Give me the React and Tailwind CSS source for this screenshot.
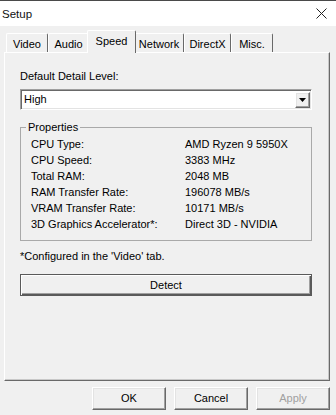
import React from "react";

const raised =
  "bg-[#f0f0f0] border border-t-white border-l-white border-b-[#696969] border-r-[#696969] shadow-[inset_-1px_-1px_0_#a0a0a0,inset_1px_1px_0_#e3e3e3]";

function Tab({ label, w, selected }) {
  if (selected) {
    return (
      <div
        className={`relative z-10 mx-[-2px] mb-[-1px] h-[23px] ${w} flex items-start justify-center pt-[4px] bg-[#f0f0f0] border-t border-l border-r border-t-white border-l-white border-r-[#696969] rounded-t-[2px]`}
      >
        {label}
      </div>
    );
  }
  return (
    <div
      className={`h-[19px] ${w} flex items-start justify-center pt-[4px] bg-[#f0f0f0] border-t border-l border-r border-t-white border-l-white border-r-[#696969] rounded-t-[2px]`}
    >
      {label}
    </div>
  );
}

const rows = [
  ["CPU Type:", "AMD Ryzen 9 5950X"],
  ["CPU Speed:", "3383 MHz"],
  ["Total RAM:", "2048 MB"],
  ["RAM Transfer Rate:", "196078 MB/s"],
  ["VRAM Transfer Rate:", "10171 MB/s"],
  ["3D Graphics Accelerator*:", "Direct 3D - NVIDIA"],
];

export default function App() {
  return (
    <div className="w-[336px] h-[415px] overflow-hidden bg-[#f0f0f0] text-black text-[11px] leading-[13px] font-['Liberation_Sans',Arial,sans-serif]">
      {/* Title bar */}
      <div className="h-[26px] bg-white border-t border-t-[#4a4a4a] flex items-center justify-between pl-[2px] pr-[9px]">
        <span className="text-[11.5px] text-[#111] pt-[1px]">Setup</span>
        <svg width="11" height="11" viewBox="0 0 11 11">
          <path d="M0.5 0.5 L10.5 10.5 M10.5 0.5 L0.5 10.5" stroke="#222" strokeWidth="1" fill="none" />
        </svg>
      </div>

      {/* Tabs */}
      <div className="h-[26px] pl-[6px] flex items-end">
        <Tab label="Video" w="w-[42px]" />
        <Tab label="Audio" w="w-[41px]" />
        <Tab label="Speed" w="w-[49px]" selected />
        <Tab label="Network" w="w-[50px]" />
        <Tab label="DirectX" w="w-[47px]" />
        <Tab label="Misc." w="w-[42px]" />
      </div>

      {/* Panel */}
      <div className="ml-[4px] w-[326px] h-[329px] border border-t-white border-l-white border-r-[#696969] border-b-[#696969] shadow-[inset_-1px_-1px_0_#c8c8c8] pl-[15px] pr-[17px] pt-[17px]">
        <div>Default Detail Level:</div>
        <div className="mt-[6px] h-[21px] bg-white border border-t-[#a0a0a0] border-l-[#a0a0a0] border-b-white border-r-white shadow-[inset_1px_1px_0_#696969,inset_-1px_-1px_0_#e3e3e3] flex items-center justify-between pl-[3px] pr-[1px]">
          <span>High</span>
          <div className={`w-[15px] h-[16px] ${raised} flex items-center justify-center`}>
            <svg width="7" height="4" viewBox="0 0 7 4">
              <path d="M0 0 H7 L3.5 4 Z" fill="#000" />
            </svg>
          </div>
        </div>

        <fieldset className="mt-[11px] border border-[#a9a9a9] pl-[10px] pt-[2px] pb-[8px]">
          <legend className="ml-[-5px] px-[2px] leading-[13px]">Properties</legend>
          <div className="grid grid-cols-[154px_1fr]">
            {rows.map(([k, v]) => (
              <React.Fragment key={k}>
                <div className="h-[16px] flex items-center">{k}</div>
                <div className="h-[16px] flex items-center">{v}</div>
              </React.Fragment>
            ))}
          </div>
        </fieldset>

        <div className="mt-[9px]">*Configured in the 'Video' tab.</div>

        <div className="mt-[11px] h-[22px] bg-[#f0f0f0] border border-[#5a5a5a] shadow-[inset_1px_1px_0_#fff,inset_-1px_-1px_0_#5a5a5a,inset_-2px_-2px_0_#a0a0a0] flex items-center justify-center">
          Detect
        </div>
      </div>

      {/* Bottom buttons */}
      <div className="mt-[6px] flex justify-end gap-[8px] pr-[6px]">
        <div className={`w-[74px] h-[23px] ${raised} flex items-center justify-center`}>OK</div>
        <div className={`w-[74px] h-[23px] ${raised} flex items-center justify-center`}>Cancel</div>
        <div className={`w-[74px] h-[23px] ${raised} flex items-center justify-center text-[#a0a0a0]`}>Apply</div>
      </div>
    </div>
  );
}
